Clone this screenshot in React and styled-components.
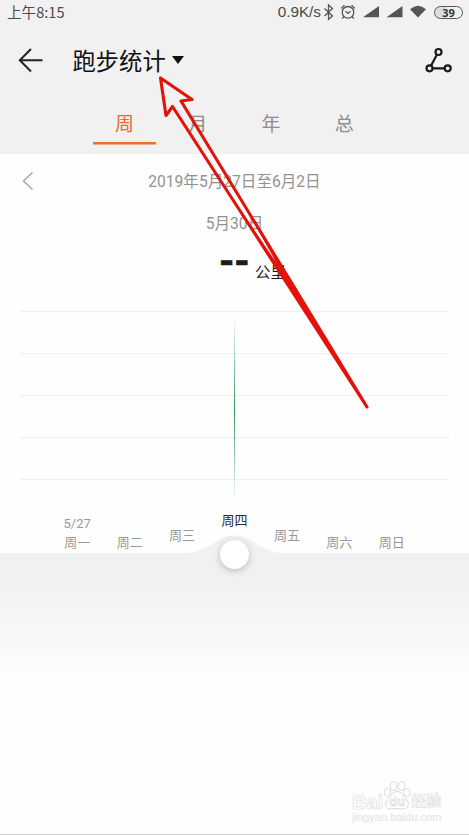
import React, { useState } from 'react';
import styled, { createGlobalStyle } from 'styled-components';

const GlobalStyle = createGlobalStyle`
    * {
        box-sizing: border-box;
    }
    body {
        margin: 0;
        background: #fefefe;
        font-family: Roboto, "Noto Sans CJK SC", sans-serif;
        -webkit-font-smoothing: antialiased;
    }
`;

const ScScreen = styled.div`
    position: relative;
    display: flex;
    flex-direction: column;
    width: 469px;
    height: 835px;
    overflow: hidden;
    background: #fefefe;
    border-bottom: 1px solid #cfcfcf;
`;

//Styling for the grey top part
const ScTop = styled.header`
    height: 154px;
    background: #f1f1f1;
`;

const ScStatusBar = styled.div`
    display: flex;
    align-items: center;
    justify-content: space-between;
    height: 24px;
    padding: 0 6px 0 7px;
    color: #4a4a4a;
    font-size: 14px;
    line-height: 20px;
`;

const ScClock = styled.span`
    font-family: "Noto Sans CJK SC", sans-serif;
    font-size: 14.6px;
`;

const ScStatusRight = styled.div`
    display: flex;
    align-items: center;
    height: 24px;
`;

const ScSpeed = styled.span`
    margin-right: 1px;
    font-family: "Liberation Sans", Arial, sans-serif;
    font-size: 15.3px;
`;

const ScStatusIcons = styled.svg`
    display: block;
    width: 112px;
    height: 24px;
`;

const ScBattery = styled.span`
    width: 29px;
    height: 13px;
    border: 1.3px solid #555;
    border-radius: 7px;
    background: linear-gradient(90deg, #ddd 40%, #f1f1f1 40%);
    color: #333;
    font-family: "Noto Sans", sans-serif;
    font-size: 11px;
    font-weight: 700;
    line-height: 11px;
    text-align: center;
`;

const ScTitleBar = styled.div`
    display: flex;
    align-items: center;
    height: 72px;
    padding: 0 16px 0 18px;
`;

const ScTitle = styled.h1`
    flex: 1;
    display: flex;
    align-items: center;
    margin: 3px 0 0 28.5px;
    color: #111;
    font-size: 23.3px;
    font-weight: 400;
    line-height: 34px;
`;

const ScCaret = styled.span`
    margin: -3px 0 0 6px;
    border: solid transparent;
    border-width: 8px 6px 0;
    border-top-color: #111;
`;

const ScTabs = styled.nav`
    display: flex;
    width: 293px;
    margin-left: 88px;
`;

const ScTab = styled.button`
    flex: 1;
    height: 49px;
    padding: 0 5px;
    border: 0;
    background: none;
    color: ${props => props.$active ? '#ee6a2c' : '#8c8c8c'};
    font-family: inherit;
    font-size: 19px;

    span {
        display: block;
        height: 49px;
        padding-top: 15px;
        line-height: 28px;
        background: ${props => props.$active ? 'linear-gradient(#e8702f, #e8702f) 0 46px / 63px 2.5px no-repeat' : 'none'};
    }
`;

//Styling for the date and the distance
const ScDateRow = styled.div`
    display: flex;
    align-items: center;
    height: 54px;
    padding-left: 22px;
`;

const ScRange = styled.span`
    flex: 1;
    padding: 2px 34px 0 0;
    color: #929292;
    font-size: 15.6px;
    line-height: 20px;
    text-align: center;
`;

const ScDay = styled.div`
    margin-top: 6px;
    height: 20px;
    color: #929292;
    font-size: 15.6px;
    line-height: 20px;
    text-align: center;
`;

const ScDistance = styled.div`
    display: flex;
    align-items: flex-start;
    height: 52px;
    margin-top: 12px;
    padding-left: 219px;
    color: #1b1b1b;
`;

const ScValue = styled.span`
    width: 36px;
    font-size: 39px;
    font-weight: 700;
    line-height: 33px;
    -webkit-text-stroke: 0.7px #1b1b1b;
`;

const ScUnit = styled.span`
    padding-top: 15px;
    font-size: 15.4px;
    line-height: 24px;
`;

//Styling for the chart
const ScChart = styled.section`
    display: flex;
    flex-direction: column;
    align-items: center;
    height: 196px;
    margin: 13px 20px 0;
    background: repeating-linear-gradient(#f0f0f0 0 1px, transparent 1px 42px);
`;

const ScMarker = styled.div`
    width: 1px;
    height: 188px;
    margin-top: 4px;
    background: linear-gradient(rgba(44, 151, 88, 0), #2c9758 50%, rgba(44, 151, 88, 0));
`;

const ScDays = styled.div`
    display: flex;
    align-items: flex-end;
    height: 46px;
    padding: 0 51px;
`;

const ScDayLabel = styled.div`
    flex: 1;
    padding-bottom: ${props => props.$lift}px;
    color: ${props => props.$active ? '#2a2a2a' : '#999'};
    font-size: 13px;
    line-height: 20px;
    text-align: center;

    small {
        display: block;
        font-size: 13px;
        line-height: 19px;
    }
`;

const ScFooter = styled.div`
    position: relative;
    height: 140px;
    background: linear-gradient(#f0f0f0, #f1f1f1 20%, #fefefe 93%);
`;

const ScBump = styled.svg`
    position: absolute;
    left: 180px;
    top: -19px;
`;

const ScHandle = styled.button`
    position: absolute;
    left: 220px;
    top: -13px;
    width: 29px;
    height: 29px;
    padding: 0;
    border: 0;
    border-radius: 50%;
    background: #fff;
    box-shadow: 0 2px 7px rgba(0, 0, 0, 0.22);
`;

//The pointer and the watermark lie over the screen
const ScPointer = styled.svg`
    position: absolute;
    left: 0;
    top: 0;
    pointer-events: none;
`;

const ScWatermark = styled.div`
    position: absolute;
    left: 352px;
    top: 779px;
    width: 96px;
    color: #fefefe;
    font-family: "Liberation Sans", "Noto Sans CJK SC", sans-serif;
    -webkit-text-stroke: 0.7px #dedede;
`;

const ScBrand = styled.div`
    display: flex;
    align-items: center;
    height: 32px;
    font-size: 20px;
    font-weight: 700;
    line-height: 32px;

    span {
        padding-top: 13px;
    }
    span:last-child {
        padding-top: 12px;
        font-size: 15px;
    }
`;

const ScPaw = styled.svg`
    width: 28px;
    height: 32px;
    flex: none;
`;

const ScUrl = styled.div`
    color: #e6e6e6;
    font-size: 11.1px;
    line-height: 13px;
    -webkit-text-stroke: 0.2px #e6e6e6;
`;

const tabs = ['周', '月', '年', '总'];

const days = [
    { name: '周一', date: '5/27', lift: 0 },
    { name: '周二', lift: 0 },
    { name: '周三', lift: 7 },
    { name: '周四', lift: 22 },
    { name: '周五', lift: 7 },
    { name: '周六', lift: 0 },
    { name: '周日', lift: 0 },
];

//Bluetooth, alarm, two signals and wifi
const StatusIcons = () => (
    <ScStatusIcons viewBox="322 0 112 24" fill="none" stroke="#555" strokeWidth="1.3">
        <path d="M324.5 8.500l8 7.500-4 3.300V5l4 3.500-8 7.500" />
        <circle cx="348" cy="12.300" r="5.800" />
        <path d="M345.500 11.300l2.500 2.200 2.500-2.200M341.300 8.500l3.200-3.300M351.500 5.200l3.200 3.300M344 16.500l-1.700 2M352 16.500l1.700 2" />
        <path d="M379 6v11.300h-16zM402.500 6v11.300h-16z" fill="#555" stroke="none" />
        <path d="M410 9.300q8-7 16 0L418 17.500z" fill="#555" stroke="none" />
    </ScStatusIcons>
);

const App = () => {
    const [tab, setTab] = useState('周');
    const [day, setDay] = useState('周四');

    return (
        <ScScreen>
            <GlobalStyle />
            <ScTop>
                <ScStatusBar>
                    <ScClock>上午8:15</ScClock>
                    <ScStatusRight>
                        <ScSpeed>0.9K/s</ScSpeed>
                        <StatusIcons />
                        <ScBattery>39</ScBattery>
                    </ScStatusRight>
                </ScStatusBar>
                <ScTitleBar>
                    <svg width="26" height="26" viewBox="0 0 26 26" fill="none" stroke="#222" strokeWidth="2">
                        <path d="M13 2L1.800 13.300 13 24.500M2 13.300h22.500" />
                    </svg>
                    <ScTitle>跑步统计<ScCaret /></ScTitle>
                    <svg width="28" height="28" viewBox="0 0 28 28" fill="none" stroke="#1a1a1a" strokeWidth="2.2">
                        <circle cx="13.5" cy="6" r="3" />
                        <circle cx="4.5" cy="22.300" r="3" />
                        <circle cx="22.700" cy="22.300" r="3" />
                        <path d="M12 8.600L6 19.700M7.500 22.300h12.200" />
                    </svg>
                </ScTitleBar>
                <ScTabs>
                    {tabs.map(t => (
                        <ScTab key={t} type="button" $active={t === tab} onClick={() => setTab(t)}>
                            <span>{t}</span>
                        </ScTab>
                    ))}
                </ScTabs>
            </ScTop>

            <ScDateRow>
                <svg width="12" height="20" viewBox="0 0 12 20" fill="none" stroke="#aaa" strokeWidth="1.6">
                    <path d="M10.500 1.500L1.500 10l9 8.500" />
                </svg>
                <ScRange>2019年5月27日至6月2日</ScRange>
            </ScDateRow>
            <ScDay>5月30日</ScDay>
            <ScDistance>
                <ScValue>--</ScValue>
                <ScUnit>公里</ScUnit>
            </ScDistance>

            <ScChart>
                <ScMarker />
            </ScChart>
            <ScDays>
                {days.map(d => (
                    <ScDayLabel key={d.name} $lift={d.lift} $active={d.name === day} onClick={() => setDay(d.name)}>
                        {d.date && <small>{d.date}</small>}
                        {d.name}
                    </ScDayLabel>
                ))}
            </ScDays>
            <ScFooter>
                <ScBump width="109" height="20" viewBox="0 0 109 20">
                    <path d="M0 19.500C32 19.500 34 1.500 54.500 1.500S77 19.500 109 19.500z" fill="#f0f0f0" />
                </ScBump>
                <ScHandle type="button" />
            </ScFooter>

            <ScWatermark>
                <ScBrand>
                    <span>Bai</span>
                    <ScPaw viewBox="0 0 28 32" fill="#fefefe" stroke="#dadada" strokeWidth="1">
                        <ellipse cx="4.500" cy="13.500" rx="3.300" ry="4" />
                        <ellipse cx="10.500" cy="7" rx="3.300" ry="4.300" />
                        <ellipse cx="18.500" cy="7" rx="3.300" ry="4.300" />
                        <ellipse cx="24" cy="13.500" rx="3.300" ry="4" />
                        <path d="M14 12.500c5 0 6 5 9.500 8 4 4 1 10-3.500 9.500q-6-1-12 0c-5 .5-7.500-5.500-3.500-9.500C8 17.500 9 12.500 14 12.500z" />
                        <text x="14" y="27" textAnchor="middle" fontSize="13" strokeWidth="0.7">du</text>
                    </ScPaw>
                    <span>经验</span>
                </ScBrand>
                <ScUrl>jingyan.baidu.com</ScUrl>
            </ScWatermark>

            <ScPointer width="469" height="835" viewBox="0 0 469 835" fill="none" stroke="#e3120b" strokeWidth="3.1" strokeLinejoin="round">
                <path d="M160.500 78L166 115.500 172.500 106.500 367 407 181 101 192 99.500z" />
                <path d="M233.500 200L276 262 241.500 200 367 407z" fill="#e3120b" stroke="none" />
            </ScPointer>
        </ScScreen>
    );
};

export default App;
